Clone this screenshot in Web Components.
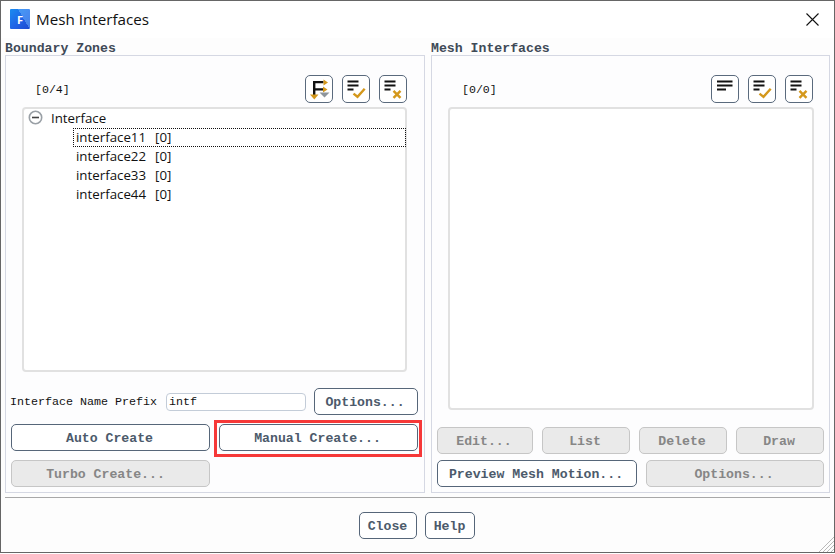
<!DOCTYPE html>
<html lang="en"><head><meta charset="utf-8"><title>Mesh Interfaces</title>
<style>
html,body{margin:0;padding:0;background:#fff}
body{width:835px;height:554px;overflow:hidden;font-family:"Liberation Mono",monospace;color:#111}
</style></head><body>
<x-dialog heading="Mesh Interfaces">
  <x-group slot="left" heading="Boundary Zones" style="width:420px">
    <x-pane count="[0/4]" first="filter">
      <x-tree root="Interface">
        <x-tree-item selected name="interface11" value="[0]"></x-tree-item>
        <x-tree-item name="interface22" value="[0]"></x-tree-item>
        <x-tree-item name="interface33" value="[0]"></x-tree-item>
        <x-tree-item name="interface44" value="[0]"></x-tree-item>
      </x-tree>
      <x-left-actions slot="actions">
        <x-field slot="field" label="Interface Name Prefix" value="intf"></x-field>
        <x-btn slot="opt" style="width:104px">Options...</x-btn>
        <x-btn slot="a" style="width:199px">Auto Create</x-btn>
        <x-btn slot="b" highlight style="width:199px">Manual Create...</x-btn>
        <x-btn slot="c" disabled style="width:199px;--pad-r:10px">Turbo Create...</x-btn>
      </x-left-actions>
    </x-pane>
  </x-group>
  <x-group slot="right" heading="Mesh Interfaces" style="width:399px">
    <x-pane count="[0/0]" first="lines" wide>
      <x-tree></x-tree>
      <x-right-actions slot="actions">
        <x-btn disabled style="width:96px">Edit...</x-btn>
        <x-btn disabled style="width:88px">List</x-btn>
        <x-btn disabled style="width:88px">Delete</x-btn>
        <x-btn disabled style="width:88px">Draw</x-btn>
        <x-btn style="width:200px">Preview Mesh Motion...</x-btn>
        <x-btn disabled style="width:178px">Options...</x-btn>
      </x-right-actions>
    </x-pane>
  </x-group>
  <x-btn slot="footer" style="width:58px;--pad-r:0px">Close</x-btn>
  <x-btn slot="footer" style="width:50px;--pad-r:0px">Help</x-btn>
</x-dialog>
<script>
function def(name, html){
  customElements.define(name, class extends HTMLElement{
    constructor(){super();this.attachShadow({mode:'open'});}
    connectedCallback(){
      const a=n=>{const v=this.getAttribute(n);return v==null?'':v;};
      this.shadowRoot.innerHTML=html(a,this);
    }
  });
}
const ICONS={
 lines:'<rect x="6" y="5.5" width="15.5" height="2"/><rect x="6" y="9.5" width="15.5" height="2"/><rect x="6" y="13.5" width="9" height="2"/>',
 check:'<rect x="5.5" y="5.5" width="11" height="2"/><rect x="5.5" y="9.5" width="11" height="2"/><rect x="5.5" y="13.5" width="6" height="2"/><path d="M11.5 18.6l4 3.2 7.2-8" fill="none" stroke="#d4981c" stroke-width="2.4"/>',
 cross:'<rect x="5.5" y="5.5" width="11" height="2"/><rect x="5.5" y="9.5" width="11" height="2"/><rect x="5.5" y="13.5" width="6" height="2"/><path d="M14.5 15.8l7 7M21.5 15.8l-7 7" fill="none" stroke="#d4981c" stroke-width="2.4"/>',
 filter:'<path d="M8 6h10.5v2.2H10.4v5H18v2.2h-7.6V20H8z"/><path d="M18.5 4.5l4.5 3-4.5 3zM18 11.5l4.5 3-4.5 3z" fill="#d4981c"/><path d="M14.5 17.5h10l-5 5z" fill="#8e959c"/><path d="M5 19.5h8.5l-4.2 5z" fill="#d4981c"/>'
};
def('x-icon-btn',a=>`<style>
:host{display:block;width:28px;height:28px}
.b{box-sizing:border-box;width:28px;height:28px;border:1px solid #5a6a7d;border-radius:5px;background:#fff}
svg{display:block;margin:-1px}
</style><div class="b"><svg width="28" height="28" viewBox="0 0 28 28" fill="#111">${ICONS[a('kind')]}</svg></div>`);
def('x-btn',(a,el)=>{
 const dis=el.hasAttribute('disabled'),hi=el.hasAttribute('highlight');
 return `<style>
:host{display:block;height:27px;position:relative;flex:none}
.b{box-sizing:border-box;height:27px;padding:2px var(--pad-r,2px) 0 0;display:flex;align-items:center;justify-content:center;border-radius:5px;
 font:bold 13.2px "Liberation Mono",monospace;white-space:pre;
 border:1px solid ${dis?'#c6c6c6':'#566679'};background:${dis?'#eaeaea':'#fff'};color:${dis?'#868686':'#4c5a6b'}}
.mark{position:absolute;left:-5px;right:-4px;top:-4px;bottom:-6px;border:3px solid #f63838;pointer-events:none}
</style><div class="b"><slot></slot></div>${hi?'<div class="mark"></div>':''}`;});
def('x-dialog',a=>`<style>
:host{display:block;box-sizing:border-box;width:835px;height:553px;border:1px solid #666;background:#fdfdfd;position:relative}
.wrap{display:flex;flex-direction:column;height:100%}
.title{flex:none;height:37px;box-sizing:border-box;padding:0 15px 1px 9px;background:#fff;display:flex;align-items:center;
 font:15.2px "Open Sans","Noto Sans",sans-serif;color:#111;gap:6px}
.logo{width:20px;height:20px;border-radius:1px;background:linear-gradient(60deg,transparent 62%,rgba(120,190,255,.45) 62%),linear-gradient(135deg,#1a8cf0 0%,#1f63e6 55%,#1d49cf 100%);
 color:#fff;font:bold 11px "Open Sans",sans-serif;display:flex;align-items:center;justify-content:center}
.x{margin-left:auto;display:block}
.main{flex:1;display:flex;gap:6px;padding:0 4px;min-height:0}
.rule{flex:none;height:1px;background:#a8a8a8;margin:4px 4px 0}
.foot{flex:none;height:54px;box-sizing:border-box;padding:14px 2px 0 0;display:flex;justify-content:center;gap:8px}
.grip{position:absolute;right:0;bottom:0}
</style><div class="wrap">
<div class="title"><div class="logo">F</div><span>${a('heading')}</span>
<svg class="x" width="13" height="13" viewBox="0 0 13 13"><path d="M.5.5l12 12M12.5.5l-12 12" stroke="#111" stroke-width="1.1" fill="none"/></svg></div>
<div class="main"><slot name="left"></slot><slot name="right"></slot></div>
<div class="rule"></div>
<div class="foot"><slot name="footer"></slot></div>
</div>
<svg class="grip" width="16" height="16" viewBox="0 0 16 16"><path d="M16 1L1 16M16 5L5 16M16 9L9 16M16 13L13 16" stroke="#b9b9b9" stroke-width="1"/></svg>`);
def('x-group',a=>`<style>
:host{display:flex;flex-direction:column;flex:none;min-height:0}
.h{flex:none;height:17px;box-sizing:border-box;padding-top:5px;font:bold 13.2px/12px "Liberation Mono",monospace;color:#3f4a57;white-space:pre}
.box{flex:1;min-height:0;box-sizing:border-box;border:1px solid #d5d8e3;background:#fdfdfe}
</style><div class="h">${a('heading')}</div><div class="box"><slot></slot></div>`);
def('x-pane',(a,el)=>{
 const wide=el.hasAttribute('wide');
 return `<style>
:host{display:flex;flex-direction:column;height:100%}
.top{flex:1;min-height:0;display:flex;flex-direction:column;gap:4px;padding:19px ${wide?15:17}px 0 16px}
.hd{flex:none;display:flex;align-items:center;height:28px;padding-right:${wide?1:0}px}
.c{font:11.6px "Liberation Mono",monospace;color:#111;padding:0 0 0 ${wide?14:13}px}
.ic{margin-left:auto;display:flex;gap:9px}
::slotted(x-tree){flex:1;min-height:0}
</style><div class="top"><div class="hd"><span class="c">${a('count')}</span><div class="ic">
<x-icon-btn kind="${a('first')}"></x-icon-btn><x-icon-btn kind="check"></x-icon-btn><x-icon-btn kind="cross"></x-icon-btn></div></div>
<slot></slot></div><slot name="actions"></slot>`;});
def('x-tree',a=>`<style>
:host{display:block;box-sizing:border-box;border:2px solid #e1e1e1;border-radius:4px;background:#fff;font:13.3px "Open Sans","Noto Sans",sans-serif;color:#111}
.root{display:${a('root')?'flex':'none'};align-items:center;box-sizing:border-box;height:19px;padding:0 0 2px 4px;gap:8px}
svg{flex:none}
.list{display:flex;flex-direction:column}
</style><div class="root"><svg width="15" height="15" viewBox="0 0 15 15"><circle cx="7.5" cy="7.5" r="6.2" fill="#fff" stroke="#9aa0a6" stroke-width="1.6"/><rect x="4" y="6.7" width="7" height="1.6" fill="#444"/></svg><span>${a('root')}</span></div><div class="list"><slot></slot></div>`);
def('x-tree-item',(a,el)=>`<style>
:host{display:block;height:19px}
.r{box-sizing:border-box;height:19px;margin-left:49px;padding:0 0 2px 2px;margin-right:-1px;display:flex;align-items:center;gap:9px;white-space:pre;
 border:1px dotted ${el.hasAttribute('selected')?'#111':'transparent'}}
</style><div class="r"><span>${a('name')}</span><span>${a('value')}</span></div>`);
def('x-field',a=>`<style>
:host{display:flex;align-items:center;height:27px}
.l{width:156px;font:11.67px "Liberation Mono",monospace;color:#111;white-space:pre;flex:none}
.i{box-sizing:border-box;width:140px;height:18px;border:1px solid #c3ccd8;border-radius:4px;background:#fff;padding-left:2px;
 font:11.67px/16px "Liberation Mono",monospace;color:#111}
</style><span class="l">${a('label')}</span><div class="i">${a('value')}</div>`);
def('x-left-actions',()=>`<style>
:host{display:flex;flex-direction:column;gap:9px;flex:none;padding:16px 6px 5px 5px}
.r{display:flex;gap:9px}
.f{margin-left:-1px;gap:8px}
</style><div class="r f"><slot name="field"></slot><slot name="opt"></slot></div>
<div class="r"><slot name="a"></slot><slot name="b"></slot></div>
<div class="r"><slot name="c"></slot></div>`);
def('x-right-actions',()=>`<style>
:host{display:flex;flex-wrap:wrap;gap:6px 9px;flex:none;padding:17px 5px 5px 5px}
</style><slot></slot>`);
</script>
</body></html>
